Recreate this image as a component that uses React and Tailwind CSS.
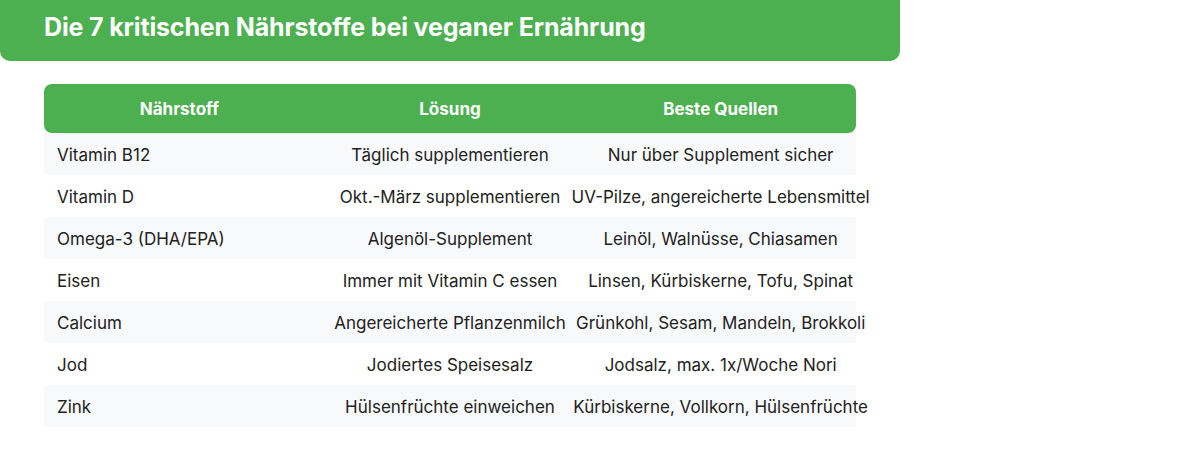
const rows = [
  ["Vitamin B12", "Täglich supplementieren", "Nur über Supplement sicher"],
  ["Vitamin D", "Okt.-März supplementieren", "UV-Pilze, angereicherte Lebensmittel"],
  ["Omega-3 (DHA/EPA)", "Algenöl-Supplement", "Leinöl, Walnüsse, Chiasamen"],
  ["Eisen", "Immer mit Vitamin C essen", "Linsen, Kürbiskerne, Tofu, Spinat"],
  ["Calcium", "Angereicherte Pflanzenmilch", "Grünkohl, Sesam, Mandeln, Brokkoli"],
  ["Jod", "Jodiertes Speisesalz", "Jodsalz, max. 1x/Woche Nori"],
  ["Zink", "Hülsenfrüchte einweichen", "Kürbiskerne, Vollkorn, Hülsenfrüchte"],
];

export default function App() {
  return (
    <div className="w-[1200px] h-[457px] bg-white text-[#222] font-['Inter','Noto_Sans',sans-serif]">
      <div className="w-[900px] h-[61px] bg-[#4caf50] rounded-b-[10px] flex items-center pl-[44px] pb-[5px]">
        <h1 className="text-white font-bold text-[25px] tracking-[-0.15px]">
          Die 7 kritischen Nährstoffe bei veganer Ernährung
        </h1>
      </div>

      <div className="ml-[44px] mt-[23px] w-[812px]">
        <div className="grid grid-cols-3 h-[49px] pt-[3px] bg-[#4caf50] rounded-[8px] text-white font-bold text-[17px]">
          <div className="flex items-center justify-center">Nährstoff</div>
          <div className="flex items-center justify-center">Lösung</div>
          <div className="flex items-center justify-center">Beste Quellen</div>
        </div>
        {rows.map((r, i) => (
          <div
            key={r[0]}
            className={
              "grid grid-cols-3 h-[42px] pt-[3px] text-[17px] whitespace-nowrap " +
              (i % 2 === 0 ? "bg-[#f8f9fa]" : "bg-white")
            }
          >
            <div className="flex items-center pl-[13px]">{r[0]}</div>
            <div className="flex items-center justify-center">{r[1]}</div>
            <div className="flex items-center justify-center">{r[2]}</div>
          </div>
        ))}
      </div>
    </div>
  );
}
